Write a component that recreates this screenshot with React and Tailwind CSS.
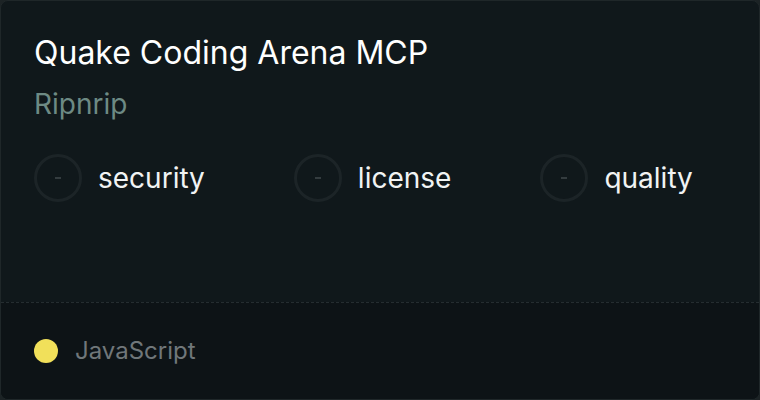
export default function App() {
  const checks = ['security', 'license', 'quality']

  return (
    <div className="w-[760px] h-[400px] bg-[#1c2325]" style={{ fontFamily: 'Inter, "Noto Sans", sans-serif' }}>
      <div className="w-full h-full flex flex-col rounded-[8px] border border-[#1f2729] bg-[#10181b] overflow-hidden">
        {/* Body */}
        <div className="flex-1 px-[33px] pt-[32px]">
          <h1 className="text-[32px] leading-[40px] text-white">Quake Coding Arena MCP</h1>
          <p className="mt-[14px] text-[28px] leading-[34px] text-[#6d8a84]">Ripnrip</p>
          <div className="mt-[33px] flex items-center gap-[89px]">
            {checks.map((c) => (
              <div key={c} className="flex items-center gap-[16px]">
                <div className="w-[48px] h-[48px] rounded-full border-[3px] border-[#1c2427] flex items-center justify-center">
                  <span className="block w-[6px] h-[2px] bg-[#343c3f]" />
                </div>
                <span className="text-[28px] leading-[34px] text-[#f1f3f3]">{c}</span>
              </div>
            ))}
          </div>
        </div>

        {/* Footer */}
        <div className="h-[97px] border-t border-dashed border-[#252d30] bg-[#0d1316] flex items-center px-[33px] gap-[17px]">
          <span className="w-[24px] h-[24px] rounded-full bg-[#f1e05a]" />
          <span className="text-[24px] leading-[30px] text-[#70777a]">JavaScript</span>
        </div>
      </div>
    </div>
  )
}
